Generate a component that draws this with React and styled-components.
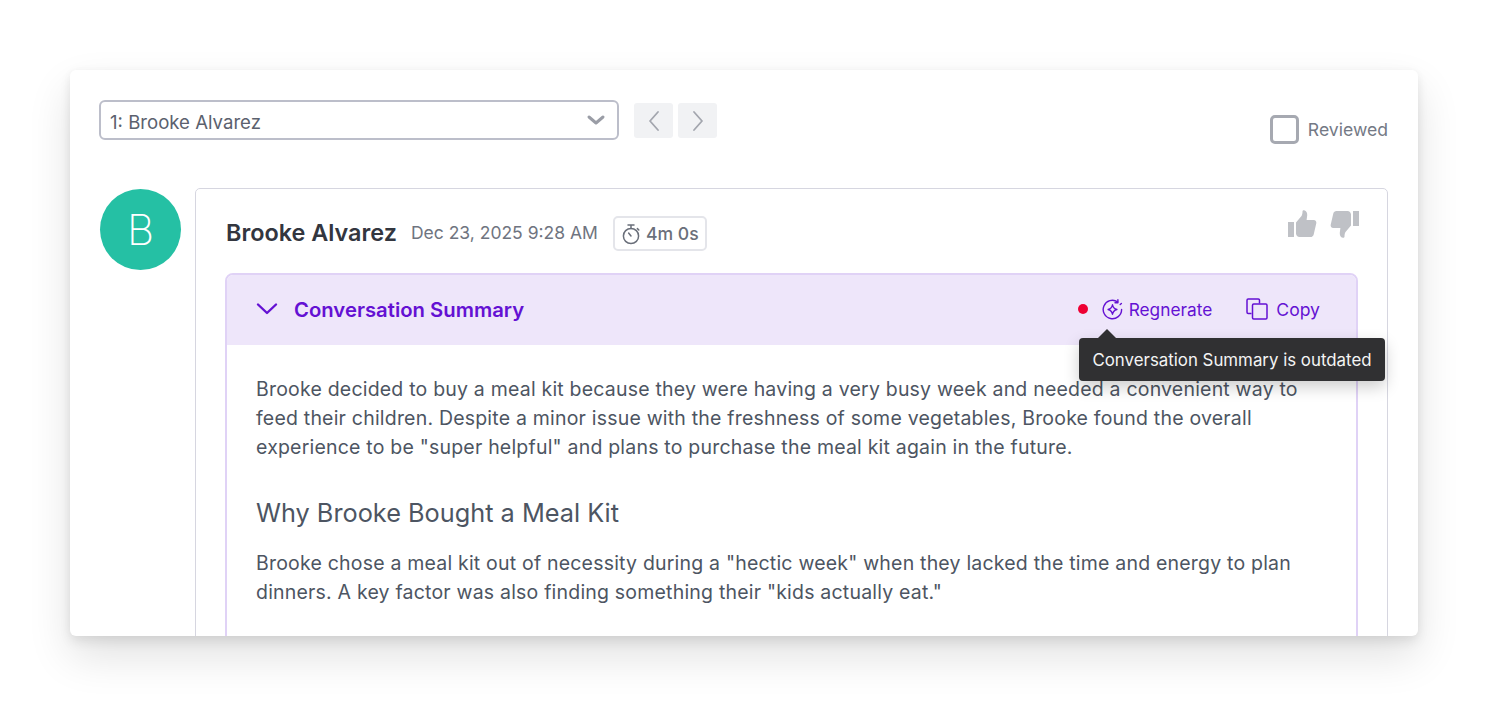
import React from 'react';
import styled, { createGlobalStyle } from 'styled-components';

const GlobalStyle = createGlobalStyle`
  html, body {
    margin: 0;
    background: #ffffff;
    font-family: Inter, "Liberation Sans", sans-serif;
  }
`;

const Page = styled.div`
  box-sizing: border-box;
  width: 1488px;
  height: 706px;
  padding: 70px 70px 70px;
  overflow: hidden;
`;

const Window = styled.div`
  box-sizing: border-box;
  height: 566px;
  padding: 30px 30px 0;
  background: #fff;
  border-radius: 6px;
  overflow: hidden;
  box-shadow: 0 20px 44px rgba(0, 0, 0, 0.12), 0 6px 12px rgba(0, 0, 0, 0.08), 0 0 8px rgba(0, 0, 0, 0.03);
`;

const Toolbar = styled.div`
  display: flex;
  align-items: flex-start;
  height: 88px;
`;

const Select = styled.div`
  box-sizing: border-box;
  width: 520px;
  height: 40px;
  margin-left: -1px;
  padding: 0 11px 0 9px;
  display: flex;
  align-items: center;
  justify-content: space-between;
  border: 2px solid #bcbeca;
  border-radius: 6px;
  font-size: 18.6px;
  color: #5b616e;
`;

const SelectValue = styled.span`
  padding-top: 4px;
`;

const Pager = styled.div`
  display: flex;
  gap: 5px;
  margin: 3px 0 0 15px;
`;

const PagerButton = styled.div`
  width: 39px;
  height: 35px;
  display: flex;
  align-items: center;
  justify-content: center;
  background: #f1f2f4;
  border-radius: 3px;
`;

const ReviewedLabel = styled.div`
  margin: 15px 0 0 auto;
  display: flex;
  align-items: center;
  gap: 9px;
  font-size: 17.6px;
  color: #747985;
`;

const Checkbox = styled.div`
  box-sizing: border-box;
  width: 29px;
  height: 29px;
  border: 3px solid #a6a9b1;
  border-radius: 5px;
`;

const Thread = styled.div`
  display: flex;
  align-items: flex-start;
  gap: 14px;
`;

const Avatar = styled.div`
  flex: none;
  width: 81px;
  height: 81px;
  margin-top: 1px;
  border-radius: 50%;
  background: #25c0a4;
  color: #fff;
  font-size: 42px;
  font-weight: 200;
  display: flex;
  align-items: center;
  justify-content: center;
`;

const Card = styled.div`
  box-sizing: border-box;
  flex: 1;
  height: 460px;
  padding: 0 29px;
  border: 1px solid #d6d6e0;
  border-radius: 5px;
`;

const CardHeader = styled.div`
  box-sizing: border-box;
  height: 84px;
  padding: 3px 0 0;
  display: flex;
  align-items: center;
`;

const Name = styled.span`
  margin-left: 1px;
  font-size: 23.4px;
  font-weight: 600;
  color: #33363f;
`;

const Timestamp = styled.span`
  margin-left: 14px;
  font-size: 17.5px;
  color: #6f7480;
`;

const Duration = styled.span`
  box-sizing: border-box;
  margin: 2px 0 0 15px;
  height: 35px;
  width: 94px;
  display: inline-flex;
  align-items: center;
  justify-content: center;
  gap: 5px;
  border: 2px solid #e4e5ea;
  border-radius: 5px;
  font-size: 17.6px;
  font-weight: 500;
  color: #6a6f7a;
`;

const Votes = styled.div`
  margin: -17px -2px 0 auto;
  display: flex;
  gap: 13px;
`;

const Summary = styled.div`
  position: relative;
  height: 400px;
  border: 2px solid #e0d2f6;
  border-radius: 8px 8px 0 0;
`;

const SummaryHeader = styled.div`
  box-sizing: border-box;
  height: 70px;
  padding: 0 36px 2px 29px;
  display: flex;
  align-items: center;
  background: #eee6fa;
  border-radius: 6px 6px 0 0;
  color: #6411d3;
`;

const SummaryTitle = styled.span`
  margin-left: 16px;
  font-size: 20.3px;
  font-weight: 600;
`;

const Dot = styled.span`
  width: 10px;
  height: 10px;
  margin-left: auto;
  border-radius: 50%;
  background: #ee0033;
`;

const Action = styled.span`
  display: inline-flex;
  align-items: center;
  gap: ${props => props.$gap}px;
  margin-left: ${props => props.$offset}px;
  font-size: ${props => props.$size}px;
  font-weight: 400;
`;

const Tooltip = styled.div`
  position: absolute;
  top: 63px;
  left: 852px;
  box-sizing: border-box;
  width: 306px;
  height: 43px;
  display: flex;
  align-items: center;
  justify-content: center;
  background: #303032;
  border-radius: 4px;
  color: #f4f4f4;
  font-size: 16.85px;
  white-space: nowrap;
  box-shadow: 0 6px 16px rgba(0, 0, 0, 0.2);
  &::before {
    content: '';
    position: absolute;
    top: -9px;
    left: 19px;
    border-left: 9px solid transparent;
    border-right: 9px solid transparent;
    border-bottom: 9px solid #303032;
  }
`;

const SummaryBody = styled.div`
  padding: 30px 29px 0;
  color: #4d5562;
`;

const Paragraph = styled.p`
  margin: 0;
  font-size: 19.5px;
  letter-spacing: 0.2px;
  line-height: 29px;
`;

const Heading = styled.h3`
  margin: 33px 0 18px;
  font-size: 25.3px;
  line-height: 36px;
  font-weight: 400;
`;

const ChevronDown = () => (
  <svg width="20" height="12" viewBox="0 0 20 12" fill="none" stroke="#9a9da6" strokeWidth="3" strokeLinecap="round" strokeLinejoin="round">
    <path d="M3 3l7 6 7-6" />
  </svg>
);

const PagerIcon = ({ d }) => (
  <svg width="14" height="22" viewBox="0 0 14 22" fill="none" stroke="#a3a6ae" strokeWidth="1.8" strokeLinecap="round" strokeLinejoin="round">
    <path d={d} />
  </svg>
);

const Stopwatch = () => (
  <svg width="20" height="22" viewBox="0 0 20 22" fill="none" stroke="#6a6f7a" strokeWidth="1.5" strokeLinecap="round">
    <circle cx="10" cy="13" r="7.6" />
    <path d="M7 2h6M10 2v3.4M10 13l-2.4-3M16.4 5.6l1.4 1.4" />
  </svg>
);

const thumbPath = 'M1 12h6v15H1zM9 12.5l5.5-6.5c.8-1.2 1-3 1-4.5 0-1 .8-1.5 1.7-1.3 2.3.5 3.3 3 3 5.4L19.6 10h7.2c1.7 0 2.9 1.6 2.5 3.2l-2.6 11.2c-.3 1.5-1.6 2.6-3.2 2.6H12.5C10.6 27 9 25.4 9 23.5z';

const ThumbUp = () => (
  <svg width="30" height="28" viewBox="0 0 30 28" fill="#bfc1c6">
    <path d={thumbPath} />
  </svg>
);

const ThumbDown = () => (
  <svg width="30" height="28" viewBox="0 0 30 28" fill="#bfc1c6">
    <path d={thumbPath} transform="rotate(180 15 14)" />
  </svg>
);

const Collapse = () => (
  <svg width="22" height="14" viewBox="0 0 22 14" fill="none" stroke="#6411d3" strokeWidth="2.4" strokeLinecap="round" strokeLinejoin="round">
    <path d="M2 2.5l9 8.5 9-8.5" />
  </svg>
);

const Regenerate = () => (
  <svg width="21" height="21" viewBox="0 0 21 21" fill="none" stroke="#6411d3" strokeWidth="1.4" strokeLinecap="round" strokeLinejoin="round">
    <path d="M15.6 2.9A9.2 9.2 0 1 0 19.6 10.5" />
    <path d="M15.9 0.8v2.9h-2.9M19.4 4.5l-1.2 1.1" />
    <path d="M10.5 5.8c.5 2.7 1.6 3.9 4.4 4.7-2.8.8-3.9 2-4.4 4.7-.5-2.7-1.6-3.9-4.4-4.7 2.8-.8 3.9-2 4.4-4.7z" />
  </svg>
);

const CopyIcon = () => (
  <svg width="22" height="22" viewBox="0 0 22 22" fill="none" stroke="#6411d3" strokeWidth="1.5" strokeLinejoin="round">
    <path d="M5.5 15.5H2.2A1.2 1.2 0 0 1 1 14.3V2.2A1.2 1.2 0 0 1 2.2 1h10.1a1.2 1.2 0 0 1 1.2 1.2V5.5" />
    <rect x="6.5" y="6" width="14.5" height="15" rx="1.2" />
  </svg>
);

export default function App() {
  return (
    <Page>
      <GlobalStyle />
      <Window>
        <Toolbar>
          <Select>
            <SelectValue>1: Brooke Alvarez</SelectValue>
            <ChevronDown />
          </Select>
          <Pager>
            <PagerButton><PagerIcon d="M11 2L3 11l8 9" /></PagerButton>
            <PagerButton><PagerIcon d="M3 2l8 9-8 9" /></PagerButton>
          </Pager>
          <ReviewedLabel>
            <Checkbox />
            Reviewed
          </ReviewedLabel>
        </Toolbar>
        <Thread>
          <Avatar>B</Avatar>
          <Card>
            <CardHeader>
              <Name>Brooke Alvarez</Name>
              <Timestamp>Dec 23, 2025 9:28 AM</Timestamp>
              <Duration><Stopwatch />4m 0s</Duration>
              <Votes>
                <ThumbUp />
                <ThumbDown />
              </Votes>
            </CardHeader>
            <Summary>
              <SummaryHeader>
                <Collapse />
                <SummaryTitle>Conversation Summary</SummaryTitle>
                <Dot />
                <Action $gap={6} $offset={14} $size={17.3}><Regenerate />Regnerate</Action>
                <Action $gap={8} $offset={34} $size={17.6}><CopyIcon />Copy</Action>
              </SummaryHeader>
              <Tooltip>Conversation Summary is outdated</Tooltip>
              <SummaryBody>
                <Paragraph>
                  Brooke decided to buy a meal kit because they were having a very busy week and needed a convenient way to feed their children. Despite a minor issue with the freshness of some vegetables, Brooke found the overall experience to be "super helpful" and plans to purchase the meal kit again in the future.
                </Paragraph>
                <Heading>Why Brooke Bought a Meal Kit</Heading>
                <Paragraph>
                  Brooke chose a meal kit out of necessity during a "hectic week" when they lacked the time and energy to plan dinners. A key factor was also finding something their "kids actually eat."
                </Paragraph>
              </SummaryBody>
            </Summary>
          </Card>
        </Thread>
      </Window>
    </Page>
  );
}
